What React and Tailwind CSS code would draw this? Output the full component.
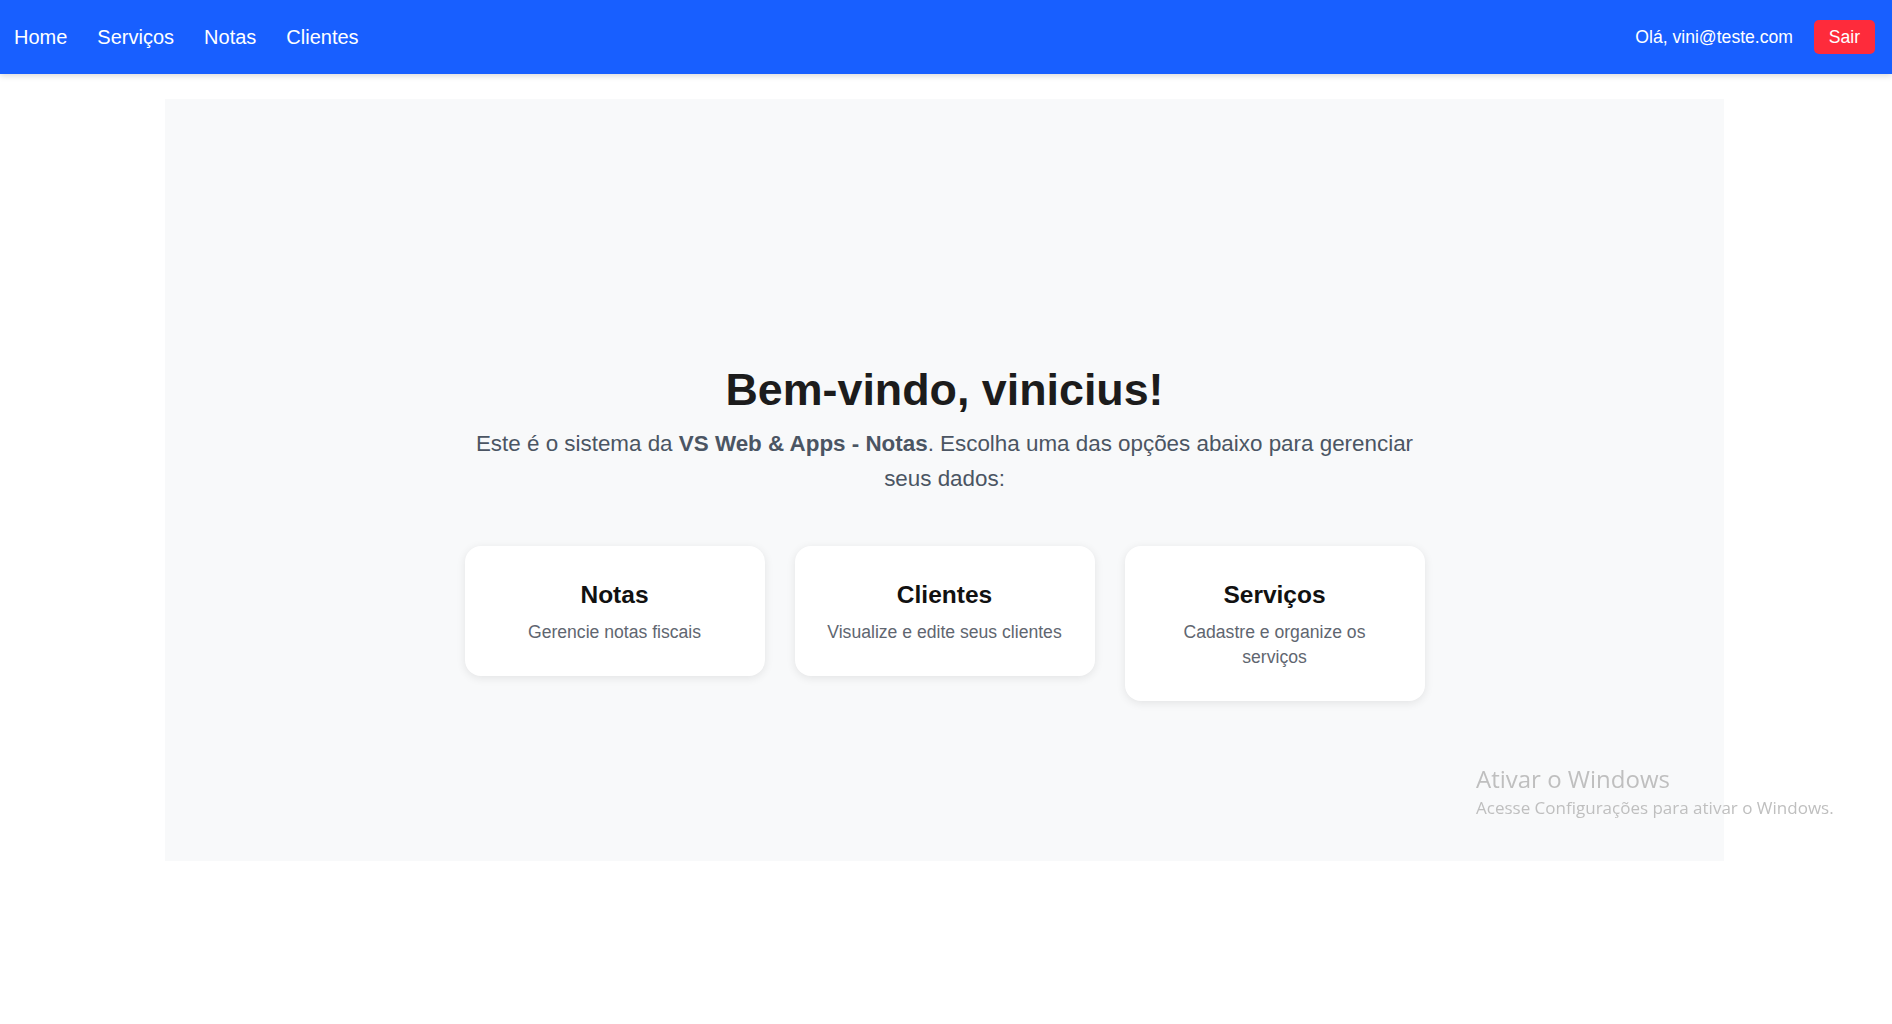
import React from 'react';

const links = ['Home', 'Serviços', 'Notas', 'Clientes'];

const cards = [
  { title: 'Notas', desc: 'Gerencie notas fiscais' },
  { title: 'Clientes', desc: 'Visualize e edite seus clientes' },
  { title: 'Serviços', desc: 'Cadastre e organize os serviços' },
];

const App = () => {
  return (
    <div className="min-h-screen bg-white font-['Liberation_Sans',Arial,sans-serif]">
      {/* Navbar */}
      <nav className="flex items-center justify-between h-[74px] pl-[14px] pr-[17px] bg-[#185fff] shadow-[0_2px_6px_rgba(0,0,0,0.15)]">
        <div className="flex items-center gap-[30px]">
          {links.map((l) => (
            <a key={l} href="#" className="text-[20px] text-white leading-none">
              {l}
            </a>
          ))}
        </div>
        <div className="flex items-center gap-[21px]">
          <span className="text-[17.6px] text-white">Olá, vini@teste.com</span>
          <button className="h-[34px] w-[61px] rounded-[5px] bg-[#fe2b3b] text-[17.6px] text-white">
            Sair
          </button>
        </div>
      </nav>

      {/* Main */}
      <main className="mt-[25px] ml-[165px] w-[1559px] h-[762px] bg-[#f8f9fa] flex flex-col items-center pt-[264px]">
        <div className="w-[960px] flex flex-col items-center text-center">
          <h1 className="text-[44.8px] font-bold leading-[1.2] text-[#1c1c1c] mb-[9px]">Bem-vindo, vinicius!</h1>
          <p className="text-[22.4px] leading-[35px] text-[#4b5563]">
            Este é o sistema da <strong className="font-bold">VS Web &amp; Apps - Notas</strong>. Escolha uma das opções abaixo para gerenciar seus dados:
          </p>

          <div className="mt-[50px] flex items-start gap-[30px]">
            {cards.map((c) => (
              <div
                key={c.title}
                className="w-[300px] rounded-[16px] bg-white px-[30px] pt-[34px] pb-[31px] shadow-[0_2px_10px_rgba(0,0,0,0.09)]"
              >
                <h2 className="text-[24.5px] font-bold leading-[1.2] text-[#111111] mb-[11px]">{c.title}</h2>
                <p className="text-[17.6px] leading-[25px] text-[#5f6670]">{c.desc}</p>
              </div>
            ))}
          </div>
        </div>
      </main>

      {/* Windows activation watermark */}
      <div className="fixed left-[1476px] top-[762px] font-['Open_Sans','Noto_Sans',sans-serif] text-[#bfbfbf] pointer-events-none">
        <div className="text-[24px] leading-[34px]">Ativar o Windows</div>
        <div className="text-[17px] leading-[24px]">Acesse Configurações para ativar o Windows.</div>
      </div>
    </div>
  );
};

export default App;
